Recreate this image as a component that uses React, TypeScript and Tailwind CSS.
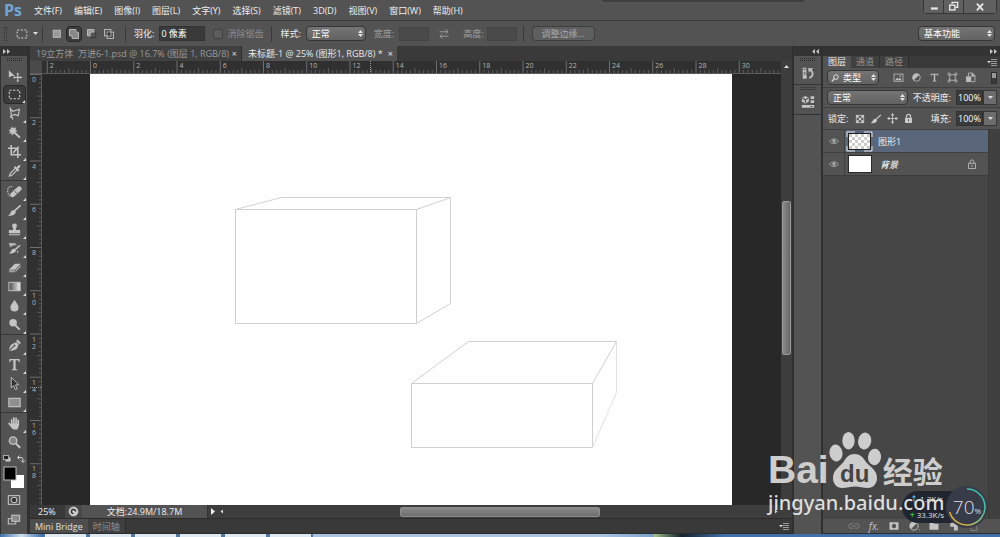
import React, { useState } from "react";

type Kids = { children?: React.ReactNode };

function Icon({ children, size = 16 }: Kids & { size?: number }) {
  return (
    <svg
      width={size}
      height={size}
      viewBox="0 0 16 16"
      fill="none"
      stroke="currentColor"
      strokeWidth="1.2"
      className="shrink-0"
      aria-hidden="true"
    >
      {children}
    </svg>
  );
}

const menus = [
  "文件(F)",
  "编辑(E)",
  "图像(I)",
  "图层(L)",
  "文字(Y)",
  "选择(S)",
  "滤镜(T)",
  "3D(D)",
  "视图(V)",
  "窗口(W)",
  "帮助(H)",
];

const marquee = <rect x="2.5" y="3.5" width="11" height="9" strokeDasharray="2.4 1.6" />;

type Tool = { name: string; art: React.ReactNode; plain?: boolean };

const toolGroups: Tool[][] = [
  [
    {
      name: "移动工具",
      plain: true,
      art: (
        <>
          <path d="M2 2.5v8l2.3-2 4 .1z" fill="currentColor" stroke="none" />
          <path d="M11.5 6v8M7.5 10h8" />
          <path d="M11.5 4.8l1.6 1.9H9.9zM11.5 15.2l1.6-1.9H9.9zM6.4 10l1.8-1.6v3.2zM16 10l-1.8-1.6v3.2z" fill="currentColor" stroke="none" />
        </>
      ),
    },
    { name: "矩形选框工具", art: marquee },
    {
      name: "多边形套索工具",
      art: <path d="M3.5 2.5l2.6 3.2 7.2-2.2-1.3 6.8-4.2-1.4-3 1.8zM4.8 10.4c-1.6.4-1.3 2 0 1.9M4.6 12c1.3.2 1.7 1.1 1.2 2.5" />,
    },
    {
      name: "魔棒工具",
      art: (
        <>
          <path d="M8.5 8.5l5.3 5" strokeWidth="2" />
          <path d="M6 1l1.1 2.4L9.8 2.500 9 5l2.3 1.3L9 7.400l.5 2.600L7 9.100 5.400 11.200 4.600 8.700 2 9l1.500-2.200L1.500 5.200l2.600-.4L3.900 2.200l2 1.200z" fill="currentColor" stroke="none" />
        </>
      ),
    },
    {
      name: "裁剪工具",
      art: <path d="M4.500 1v10.500h10.500M1 4.500h10.500V15M6.500 9.500l6-6.500" strokeWidth="1.700" />,
    },
    {
      name: "吸管工具",
      art: (
        <>
          <path d="M9 5.500l-5.600 5.700-.9 2.800 2.700-1 5.700-5.600" />
          <path d="M8 4l4.500 4.500" strokeWidth="2" />
          <path d="M9.500 5.500L12 2.600c1.400-1.200 3 .4 1.800 1.800L11 7z" fill="currentColor" stroke="none" />
        </>
      ),
    },
  ],
  [
    {
      name: "污点修复画笔工具",
      art: (
        <>
          <path d="M5.500 3C1.500 1.500 0 6 1 9.500s3.500 4.500 5 3" strokeDasharray="1.500 1" />
          <path d="M6 11.500l7-6.500" strokeWidth="5" strokeLinecap="round" />
          <path d="M8 7.500l3 3M8.500 9h.1M10.500 7.500h.1" stroke="#535353" strokeWidth="1" />
        </>
      ),
    },
    {
      name: "画笔工具",
      art: (
        <>
          <path d="M14.500 2.500L8 8.500" strokeWidth="1.800" />
          <path d="M7.500 7.500l2 2c-.8 3.500-4.800 4.800-8.500 3.700 2-.8 2.300-1.700 3-3.400.7-1.600 2.300-2.300 3.500-2.300z" fill="currentColor" stroke="none" />
        </>
      ),
    },
    {
      name: "仿制图章工具",
      art: (
        <path d="M8 1.500a2.500 2.500 0 0 1 2.400 3.300L9.500 7v1.500H14V12H2V8.500h4.500V7l-.9-2.200A2.500 2.500 0 0 1 8 1.500zM2 13h12v1.200H2z" fill="currentColor" stroke="none" />
      ),
    },
    {
      name: "历史记录画笔工具",
      art: (
        <>
          <path d="M14 4.500L9 9" strokeWidth="1.700" />
          <path d="M8 8l1.800 1.800c-1 3-4.600 4-8 3.200 2-.8 2-1.700 2.800-3C5.400 8.800 6.800 8 8 8zM1.500 2.500h8l-2 2h-3v2z" fill="currentColor" stroke="none" />
          <path d="M3 6c2-2 5-2.500 7-1.500M11.500 10.500l-.5 3" strokeDasharray="2 1" />
        </>
      ),
    },
    {
      name: "橡皮擦工具",
      art: (
        <>
          <path d="M2 10.500L8.500 4h6l-6 6.500z" fill="currentColor" stroke="none" />
          <path d="M2 10.800h6.300V13H2.500zM9 10.700L14.500 5v2.500L9 13z" fill="#a2a2a2" stroke="none" />
        </>
      ),
    },
    {
      name: "渐变工具",
      art: (
        <>
          <defs>
            <linearGradient id="ramp">
              <stop offset="0" stopColor="#4a4a4a" />
              <stop offset="1" stopColor="#f0f0f0" />
            </linearGradient>
          </defs>
          <rect x="2" y="3.500" width="12" height="9" fill="url(#ramp)" strokeWidth="1" />
        </>
      ),
    },
    {
      name: "模糊工具",
      art: <path d="M8 1.500c.8 2.700 4.300 5 4.300 8.500a4.300 4.300 0 0 1-8.600 0C3.700 6.500 7.200 4.200 8 1.500z" fill="currentColor" stroke="none" />,
    },
    {
      name: "减淡工具",
      art: (
        <>
          <circle cx="6.500" cy="6" r="4" fill="currentColor" stroke="none" />
          <path d="M9 9l4.500 4.500" strokeWidth="2" />
        </>
      ),
    },
  ],
  [
    {
      name: "钢笔工具",
      art: (
        <>
          <path d="M2 14c.5-3.500 1.500-7 4-8l4-1.500L12.500 7 11 10.500C10 13 6 13.500 2 14z" fill="currentColor" stroke="none" />
          <path d="M10.500 2.500l3.500 3.500" strokeWidth="2.200" />
          <path d="M2.500 13.500l5-5" stroke="#535353" />
          <circle cx="8" cy="8" r="1" fill="#535353" stroke="none" />
        </>
      ),
    },
    {
      name: "横排文字工具",
      art: <path d="M2.500 2h11v3.500h-.8c-.3-1.600-.8-2.100-2-2.100H9.200V12c0 .8.500 1 1.600 1.100v.9H5.200v-.9c1.100-.1 1.600-.3 1.600-1.100V3.400H5.300c-1.200 0-1.700.5-2 2.100h-.8z" fill="currentColor" stroke="none" />,
    },
    {
      name: "路径选择工具",
      art: <path d="M4.500 1.500v11l2.600-2.300L9 14.500l1.800-.8L9 9.500l3.500-.2z" fill="#303030" strokeWidth="1" />,
    },
    { name: "矩形工具", art: <rect x="2" y="3.500" width="12" height="9" fill="#8f8f8f" /> },
  ],
  [
    {
      name: "抓手工具",
      art: (
        <>
          <path d="M5 9V4M7.300 8V2M9.700 8V2.500M12 9V4.500M5 11.500L2.300 8" strokeWidth="1.800" strokeLinecap="round" />
          <path d="M4.200 8h8.700c0 3-.7 4-1.900 6.500H6.300L4 11z" fill="currentColor" stroke="none" />
        </>
      ),
    },
    {
      name: "缩放工具",
      plain: true,
      art: (
        <>
          <circle cx="6.500" cy="6" r="4" fill="#858585" strokeWidth="1.400" />
          <path d="M9.500 9l4.500 4.500" strokeWidth="2.200" />
        </>
      ),
    },
  ],
];

function Grip() {
  return <span className="h-[3px] w-[15px] border-y border-dotted border-[#2c2c2c]" />;
}

function ToolButton({ tool, active, onPick }: { tool: Tool; active: boolean; onPick: () => void }) {
  return (
    <button
      type="button"
      aria-label={tool.name}
      aria-pressed={active}
      onClick={onPick}
      className={
        active
          ? "relative flex h-[19px] w-[23px] shrink-0 items-center justify-center rounded-sm border border-[#2a2a2a] bg-[#3a3a3a] text-[#cfcfcf]"
          : "relative flex h-[19px] w-[23px] shrink-0 items-center justify-center text-[#c4c4c4]"
      }
    >
      <Icon size={15}>{tool.art}</Icon>
      {!tool.plain && (
        <svg width="3" height="3" viewBox="0 0 3 3" className="absolute right-0 bottom-0" aria-hidden="true">
          <path d="M3 0v3H0z" fill="#dedede" />
        </svg>
      )}
    </button>
  );
}

function Toolbar() {
  const [current, setCurrent] = useState("矩形选框工具");
  return (
    <aside className="flex w-7 shrink-0 flex-col border-x border-[#303030] bg-[#535353]">
      <div className="flex h-[10px] shrink-0 items-center bg-[#333] pl-[2px] text-[#c8c8c8]">
        <Chevrons />
      </div>
      <div className="flex h-[10px] shrink-0 items-start justify-center pt-[2px]">
        <Grip />
      </div>
      {toolGroups.map((group, i) => (
        <div
          key={i}
          className={i ? "flex flex-col items-center border-t border-[#383838] pt-[1px]" : "flex flex-col items-center"}
        >
          {group.map((t) => (
            <ToolButton key={t.name} tool={t} active={current === t.name} onPick={() => setCurrent(t.name)} />
          ))}
        </div>
      ))}
      <div className="flex flex-col items-center">
        <svg width="26" height="38" viewBox="0 0 26 38" aria-hidden="true">
          <rect x="4.500" y="5.500" width="5" height="4" fill="#d0d0d0" />
          <rect x="2.500" y="3.500" width="5" height="4" fill="#222" stroke="#aaa" />
          <path d="M17 5.500h3a2 2 0 0 1 2 2V10M18.500 3.500l-2 2 2 2M20 8.500l2 2 2-2" fill="none" stroke="#d0d0d0" />
          <rect x="10" y="23" width="13" height="13" fill="#fff" />
          <rect x="3" y="15" width="12" height="13" fill="#000" stroke="#bdbdbd" />
        </svg>
        <button type="button" aria-label="以快速蒙版模式编辑" className="flex h-[19px] items-center text-[#c4c4c4]">
          <Icon size={14}>
            <rect x="1.500" y="3" width="13" height="10" />
            <circle cx="8" cy="8" r="3.200" fill="#333" />
          </Icon>
        </button>
        <button type="button" aria-label="更改屏幕模式" className="flex h-[21px] items-center text-[#c4c4c4]">
          <Icon size={14}>
            <rect x="1.500" y="6.500" width="8.500" height="6" />
            <rect x="5.500" y="2.500" width="9" height="7" fill="#8a8a8a" />
          </Icon>
        </button>
      </div>
    </aside>
  );
}

function Chevrons({ left = false }: { left?: boolean }) {
  return (
    <svg width="7" height="5" viewBox="0 0 7 5" fill="currentColor" aria-hidden="true">
      {left ? <path d="M3 0v5L0 2.500zM7 0v5L4 2.500z" /> : <path d="M0 0l3 2.500L0 5zM4 0l3 2.500L4 5z" />}
    </svg>
  );
}

function Dropdown({ label, value, className, search = false }: { label: string; value: string; className: string; search?: boolean }) {
  return (
    <div className={"relative flex items-center " + className}>
      <select
        aria-label={label}
        className={
          "h-[15px] w-full appearance-none rounded-sm border border-[#363636] bg-linear-to-b from-[#757575] to-[#626262] text-[9px] leading-[13px] text-white outline-none " +
          (search ? "pl-[15px]" : "pl-[5px]")
        }
      >
        <option>{value}</option>
      </select>
      {search && (
        <svg width="8" height="8" viewBox="0 0 8 8" className="pointer-events-none absolute left-1" aria-hidden="true">
          <circle cx="5" cy="3" r="2.300" fill="none" stroke="#ddd" />
          <path d="M3.300 4.800L1 7.200" stroke="#ddd" strokeWidth="1.300" />
        </svg>
      )}
      <svg width="5" height="7" viewBox="0 0 5 7" className="pointer-events-none absolute right-[3px]" aria-hidden="true">
        <path d="M0 3l2.500-3L5 3zM0 4l2.500 3L5 4z" fill="#e4e4e4" />
      </svg>
    </div>
  );
}

function Divider() {
  return <span className="h-4 w-px shrink-0 bg-[#3a3a3a]" />;
}

function MenuBar() {
  return (
    <header className="relative flex h-[21px] shrink-0 items-center border-b border-[#3b3b3b] bg-[#535353]">
      <span className="w-[34px] pl-1 font-['Open_Sans'] text-[16px] leading-5 font-bold text-[#73a5d6]">Ps</span>
      <nav className="flex items-center gap-3 text-[9px] text-[#f0f0f0]">
        {menus.map((m) => (
          <button type="button" key={m} className="whitespace-nowrap">
            {m}
          </button>
        ))}
      </nav>
      <span className="absolute top-0 right-[196px] h-[2px] w-[202px] rounded-b bg-[#3e3e3e]" />
      <div className="mr-[3px] ml-auto flex h-[14px] self-start rounded-b-sm border border-t-0 border-[#363636] text-[#e8e8e8]">
        <button type="button" aria-label="最小化" className="flex w-5 items-center justify-center border-r border-[#363636] bg-[#606060]">
          <Icon size={12}>
            <path d="M4 10h9" strokeWidth="3" />
          </Icon>
        </button>
        <button type="button" aria-label="还原" className="flex w-5 items-center justify-center border-r border-[#363636] bg-[#606060]">
          <Icon size={11}>
            <path d="M6 4.500V2h8v7h-3" strokeWidth="2" />
            <rect x="2.500" y="6" width="7.500" height="7" strokeWidth="2" />
          </Icon>
        </button>
        <button type="button" aria-label="关闭" className="flex w-8 items-center justify-center bg-[#606060]">
          <Icon size={10}>
            <path d="M3 2.500l10 11M13 2.500l-10 11" strokeWidth="2.800" />
          </Icon>
        </button>
      </div>
    </header>
  );
}

function OptionsBar() {
  return (
    <div className="flex h-[25px] shrink-0 items-center bg-[#535353] pr-[5px] pl-[4px] text-[9px] text-[#eee]">
      <span className="mr-2 h-[14px] w-[3px] border-x border-dotted border-[#333]" />
      <span className="text-[#c8c8c8]">
        <Icon size={14}>{marquee}</Icon>
      </span>
      <svg width="5" height="3" viewBox="0 0 5 3" className="mr-1 ml-1" aria-hidden="true">
        <path d="M0 0h5L2.500 3z" fill="#ddd" />
      </svg>
      <Divider />
      <div className="mr-2 ml-[6px] flex items-center gap-px text-[#bdbdbd]">
        <button type="button" aria-label="新选区" className="flex h-4 w-4 items-center justify-center">
          <Icon size={12}>
            <rect x="3" y="3" width="9.500" height="9.500" fill="#999" />
          </Icon>
        </button>
        <button type="button" aria-label="添加到选区" className="flex h-4 w-4 items-center justify-center rounded-sm border border-[#292929] bg-[#3b3b3b]">
          <Icon size={12}>
            <path d="M2 2h8.500v3.500H14V14H5.500v-3.500H2z" fill="#888" />
          </Icon>
        </button>
        <button type="button" aria-label="从选区减去" className="ml-px flex h-4 w-4 items-center justify-center">
          <Icon size={12}>
            <path d="M2 2h8.500v3.500h-5v5H2z" fill="#999" />
            <path d="M13 6v7H6" stroke="#333" />
          </Icon>
        </button>
        <button type="button" aria-label="与选区交叉" className="flex h-4 w-4 items-center justify-center">
          <Icon size={12}>
            <rect x="2" y="2" width="8.500" height="8.500" />
            <rect x="5.500" y="5.500" width="8.500" height="8.500" />
            <rect x="6" y="6" width="4" height="4" fill="#333" stroke="none" />
          </Icon>
        </button>
      </div>
      <Divider />
      <label htmlFor="feather" className="mr-[5px] ml-2">
        羽化:
      </label>
      <input id="feather" defaultValue="0 像素" className="mr-2 h-[15px] w-[46px] border border-[#333] bg-[#3a3a3a] px-px text-white" />
      <input id="alias" type="checkbox" disabled className="mr-1 h-[10px] w-[10px] appearance-none rounded-xs border border-[#404040] bg-[#5c5c5c]" />
      <label htmlFor="alias" className="mr-2 text-[#8e8e8e]">
        消除锯齿
      </label>
      <Divider />
      <span className="mr-[5px] ml-2">样式:</span>
      <Dropdown label="样式" value="正常" className="w-[60px]" />
      <label htmlFor="selw" className="mr-[5px] ml-2 text-[#a0a0a0]">
        宽度:
      </label>
      <input id="selw" disabled className="h-[14px] w-[30px] border border-[#444] bg-[#4a4a4a]" />
      <button type="button" aria-label="高度和宽度互换" className="mx-[9px] text-[#a0a0a0]">
        <Icon size={12}>
          <path d="M2 5h11M10 2l3.500 3L10 8M14 11H3M6 8l-3.500 3L6 14" />
        </Icon>
      </button>
      <label htmlFor="selh" className="mr-[3px] ml-1 text-[#a0a0a0]">
        高度:
      </label>
      <input id="selh" disabled className="mr-[6px] h-[14px] w-[30px] border border-[#444] bg-[#4a4a4a]" />
      <Divider />
      <button type="button" className="ml-2 h-[15px] w-[63px] rounded-sm border border-[#3e3e3e] bg-[#5f5f5f] leading-[13px] text-[#a8a8a8]">
        调整边缘...
      </button>
      <Dropdown label="工作区" value="基本功能" className="ml-auto w-[77px]" />
    </div>
  );
}

const STEP = 43.25;
const range = (from: number, to: number) => Array.from({ length: to - from + 1 }, (_, i) => from + i);

function HorizontalRuler() {
  return (
    <div className="flex h-[13px] shrink-0 border-b border-[#5a5a5a] bg-[#303030]">
      <span className="w-3 shrink-0 bg-[#4a4a4a]" />
      <svg className="h-full w-full" fill="#b4b4b4" fontSize="7" fontFamily="Open Sans, sans-serif" aria-hidden="true">
        {range(-10, 400).map((k) => {
          const x = 48.5 + (k * STEP) / 10;
          const top = k % 10 === 0 ? 0 : k % 5 === 0 ? 7 : 9;
          return <path key={k} d={`M${x} ${top}V12`} stroke={k % 10 === 0 ? "#6e6e6e" : "#5c5c5c"} />;
        })}
        {range(-1, 15).map((n) => (
          <text key={n} x={51 + n * STEP} y="7">
            {Math.abs(n * 2)}
          </text>
        ))}
        <path d="M328.500 0V12" stroke="#999" strokeDasharray="1 1" />
      </svg>
    </div>
  );
}

function VerticalRuler() {
  return (
    <svg className="h-full w-3 shrink-0 border-r border-[#5a5a5a] bg-[#303030]" fill="#b4b4b4" fontSize="7" fontFamily="Open Sans, sans-serif" aria-hidden="true">
      {range(0, 300).map((k) => {
        const y = 0.5 + (k * STEP) / 10;
        const left = k % 10 === 0 ? 0 : k % 5 === 0 ? 7 : 9;
        return <path key={k} d={`M${left} ${y}H12`} stroke={k % 10 === 0 ? "#6e6e6e" : "#5c5c5c"} />;
      })}
      {range(0, 9).map((n) =>
        String(n * 2)
          .split("")
          .map((digit, i) => (
            <text key={`${n}-${i}`} x="2" y={8 + n * STEP + i * 7}>
              {digit}
            </text>
          ))
      )}
      <path d="M0 313.500H12" stroke="#999" strokeDasharray="1 1" />
    </svg>
  );
}

function Artwork() {
  return (
    <svg className="h-full w-full" fill="none" stroke="#d0d0d0" strokeWidth="1" aria-hidden="true">
      <rect x="145.500" y="135.500" width="181" height="114" />
      <path d="M145.500 135.500L191.500 123.500H360.500L326.500 135.500M360.500 123.500V229.500L326.500 249.500" />
      <rect x="321.500" y="309.500" width="181" height="64" />
      <path d="M321.500 309.500L378.500 267.500H526.500L502.500 309.500" />
      <path d="M526.500 267.500V318.500L502.500 373.500" stroke="#e0e0e0" />
    </svg>
  );
}

function PanelMenuIcon() {
  return (
    <svg width="10" height="7" viewBox="0 0 10 7" aria-hidden="true">
      <path d="M0 2h4L2 4.500z" fill="#ccc" />
      <path d="M4 .5h6M4 2.500h6M4 4.500h6M4 6.500h6" stroke="#999" />
    </svg>
  );
}

function Workspace() {
  return (
    <main className="flex min-w-0 flex-1 flex-col bg-[#303030] pl-[2px]">
      <div className="flex h-[15px] shrink-0 items-stretch bg-[#3a3a3a] text-[9px]">
        <div className="flex w-[212px] items-center justify-between border-r border-[#2c2c2c] bg-[#404040] pr-1 pl-[6px] text-[#9a9a9a]">
          <span className="whitespace-pre">19立方体  万进6-1.psd @ 16.7% (图层 1, RGB/8)</span>
          <button type="button" aria-label="关闭 19立方体" className="text-[#ddd]">
            ×
          </button>
        </div>
        <div className="flex w-[155px] items-center justify-between bg-[#535353] pr-1 pl-[6px] text-[#e8e8e8]">
          <span className="whitespace-pre">未标题-1 @ 25% (图形1, RGB/8) *</span>
          <button type="button" aria-label="关闭 未标题-1">
            ×
          </button>
        </div>
      </div>
      <div className="flex min-h-0 flex-1">
        <div className="flex min-w-0 flex-1 flex-col">
          <HorizontalRuler />
          <div className="flex min-h-0 flex-1">
            <VerticalRuler />
            <div className="flex min-w-0 flex-1 justify-start bg-[#282828] pl-12">
              <div className="w-[642px] bg-white">
                <Artwork />
              </div>
            </div>
          </div>
        </div>
        <div className="flex w-[11px] shrink-0 flex-col items-center bg-[#3d3d3d]">
          <svg width="5" height="3" viewBox="0 0 5 3" className="mt-1" aria-hidden="true">
            <path d="M0 3h5L2.500 0z" fill="#ddd" />
          </svg>
          <div className="flex-[134]" />
          <div className="w-[9px] flex-[152] rounded-xs border border-[#999] bg-linear-to-r from-[#8a8a8a] to-[#686868]" />
          <div className="flex-[151]" />
        </div>
      </div>
      <div className="flex h-[13px] shrink-0 items-center bg-[#3d3d3d] text-[9px] leading-[13px] text-[#eee]">
        <span className="w-[35px] bg-[#383838] pl-2">25%</span>
        <span className="flex h-full w-[17px] items-center justify-center bg-[#484848] text-[#ccc]">
          <Icon size={11}>
            <circle cx="8" cy="8" r="6.500" fill="currentColor" />
            <path d="M5 5h4M11 8a3 3 0 1 0-3 3" stroke="#333" strokeWidth="2" />
          </Icon>
        </span>
        <span className="w-[126px] border-r border-[#333] bg-[#535353] text-center">文档:24.9M/18.7M</span>
        <svg width="17" height="7" viewBox="0 0 17 7" className="shrink-0" aria-hidden="true">
          <path d="M3 0v7l4-3.500z" fill="#eee" />
          <path d="M15 1.500v4l-2.500-2z" fill="#ddd" />
        </svg>
        <div className="flex-[176]" />
        <div className="h-[10px] flex-[198] rounded-xs border border-[#8d8d8d] bg-linear-to-b from-[#8a8a8a] to-[#6d6d6d]" />
        <div className="flex-[176]" />
        <svg width="17" height="7" viewBox="0 0 17 7" className="shrink-0" aria-hidden="true">
          <path d="M0 1.500v4L2.500 3.500z" fill="#ddd" />
        </svg>
      </div>
      <div className="flex h-4 shrink-0 items-stretch border-t border-b border-[#2c2c2c] bg-[#393939] text-[9px]">
        <button type="button" className="bg-[#4d4d4d] px-[5px] text-[#e0e0e0]">
          Mini Bridge
        </button>
        <button type="button" className="border-r border-[#2c2c2c] bg-[#404040] px-[5px] text-[#909090]">
          时间轴
        </button>
        <span className="mr-[3px] ml-auto flex items-center">
          <PanelMenuIcon />
        </span>
      </div>
    </main>
  );
}

function Dock() {
  return (
    <div className="flex w-[27px] shrink-0 flex-col bg-[#535353] text-[#c4c4c4]">
      <div className="flex h-[10px] shrink-0 items-center justify-end bg-[#333] pr-[2px]">
        <Chevrons left />
      </div>
      <button type="button" aria-label="历史记录" className="flex h-[29px] flex-col items-center justify-between border-b border-[#343434] pt-[2px] pb-1">
        <Grip />
        <Icon size={14}>
          <path d="M2.500 2.500h3v3h-3zM2.500 6.500h3v3h-3z" />
          <rect x="2" y="10.500" width="4.500" height="4" fill="currentColor" stroke="none" />
          <path d="M9.500 13.500C14 12 14.500 7.500 11 4.500" strokeWidth="2" />
          <path d="M8 2.500h6L9 7.500z" fill="currentColor" stroke="none" />
        </Icon>
      </button>
      <button type="button" aria-label="属性" className="flex h-[30px] flex-col items-center justify-between border-b border-[#343434] pt-[2px] pb-[5px]">
        <Grip />
        <Icon size={14}>
          <path d="M5 1l4 2v4.500l-4 2.500-4-2.500V3z" fill="currentColor" stroke="none" />
          <path d="M1.500 3.500L5 5.500l3.500-2M5 5.500V9.500" stroke="#535353" />
          <path d="M11 1.500h4v3h-4zM11 6h4v3h-4zM1 11.500h14v3H1z" fill="currentColor" stroke="none" />
          <path d="M10.500 12.500h3l-1.500 1.500z" fill="#444" stroke="none" />
        </Icon>
      </button>
    </div>
  );
}

const lockArt = (
  <>
    <rect x="3" y="7" width="10" height="7.500" fill="currentColor" stroke="none" />
    <path d="M5 7V5a3 3 0 0 1 6 0v2" strokeWidth="1.800" />
    <path d="M8 9v3" stroke="#535353" strokeWidth="1.500" />
  </>
);

const filters: { name: string; art: React.ReactNode }[] = [
  {
    name: "像素图层滤镜",
    art: (
      <>
        <rect x="1.500" y="3" width="13" height="10.500" />
        <path d="M3 12l3-4 2 2 2-1.500 3 3.500z" fill="currentColor" stroke="none" />
        <circle cx="10.500" cy="6" r="1.200" fill="currentColor" stroke="none" />
      </>
    ),
  },
  {
    name: "调整图层滤镜",
    art: (
      <>
        <circle cx="8" cy="8" r="5.500" />
        <path d="M4 12A5.500 5.500 0 0 1 12 4z" fill="currentColor" stroke="none" />
      </>
    ),
  },
  {
    name: "文字图层滤镜",
    art: <path d="M2.500 2.500h11v3h-1l-.8-1.500H9.100v8.500l1.500.4v.8H5.400v-.8l1.500-.4V4H4.300l-.8 1.500h-1z" fill="currentColor" stroke="none" />,
  },
  {
    name: "形状图层滤镜",
    art: (
      <>
        <path d="M4 4h8v8H4z" />
        <path d="M1.500 1.500h3v3h-3zM11.500 1.500h3v3h-3zM1.500 11.500h3v3h-3zM11.500 11.500h3v3h-3z" strokeWidth="1" />
      </>
    ),
  },
  {
    name: "智能对象滤镜",
    art: (
      <>
        <path d="M5 6V1.500h6L14.500 5v9H9" />
        <path d="M10 2v4h4z" fill="currentColor" />
        <rect x="2" y="7" width="6.500" height="7" fill="currentColor" />
      </>
    ),
  },
];

function Percent({ id, label }: { id: string; label: string }) {
  return (
    <div className="ml-auto flex items-center">
      <label htmlFor={id} className="mr-[5px]">
        {label}
      </label>
      <input id={id} defaultValue="100%" className="h-[15px] w-[27px] border border-[#333] bg-[#3a3a3a] pl-px text-white" />
      <button type="button" aria-label={label + "滑块"} className="flex h-[15px] w-[14px] items-center justify-center border border-[#363636] bg-[#6c6c6c]">
        <svg width="5" height="3" viewBox="0 0 5 3" aria-hidden="true">
          <path d="M0 0h5L2.500 3z" fill="#ddd" />
        </svg>
      </button>
    </div>
  );
}

function Eye() {
  return (
    <button type="button" aria-label="图层可见性" className="flex w-[22px] shrink-0 items-center justify-center self-stretch border-r border-[#404040] bg-[#535353] text-[#a8a8a8]">
      <Icon size={10}>
        <path d="M1 8.500C4 3.500 12 3.500 15 8.500 12 13 4 13 1 8.500z" strokeWidth="1.600" />
        <circle cx="8" cy="8" r="2.800" fill="currentColor" stroke="none" />
      </Icon>
    </button>
  );
}

function LayersPanel() {
  return (
    <section className="ml-[2px] flex min-w-0 flex-1 flex-col bg-[#535353] text-[9px] text-[#eee]">
      <div className="flex h-[10px] shrink-0 items-center justify-end bg-[#333] pr-[3px] text-[#c8c8c8]">
        <Chevrons />
      </div>
      <div className="flex h-3 shrink-0 items-stretch bg-[#3a3a3a] leading-3">
        <button type="button" className="bg-[#535353] px-[5px]">
          图层
        </button>
        <button type="button" className="border-r border-[#2f2f2f] bg-[#404040] px-[5px] text-[#949494]">
          通道
        </button>
        <button type="button" className="border-r border-[#2f2f2f] bg-[#404040] px-[5px] text-[#949494]">
          路径
        </button>
        <span className="mr-[3px] ml-auto flex items-center">
          <PanelMenuIcon />
        </span>
      </div>
      <div className="flex h-5 shrink-0 items-center border-b border-[#404040] pr-[3px] pl-1">
        <Dropdown label="滤镜类型" value="类型" className="w-[52px]" search />
        <div className="ml-[13px] flex items-center gap-[5px] text-[#bdbdbd]">
          {filters.map((f) => (
            <button type="button" key={f.name} aria-label={f.name} className="flex w-[13px] justify-center">
              <Icon size={11}>{f.art}</Icon>
            </button>
          ))}
        </div>
        <button type="button" aria-label="打开或关闭图层过滤" className="ml-auto h-3 w-[6px] border border-[#2e2e2e] bg-linear-to-b from-[#999] from-50% to-[#3a3a3a] to-50%" />
      </div>
      <div className="flex h-5 shrink-0 items-center border-b border-[#404040] pr-[3px] pl-1">
        <Dropdown label="混合模式" value="正常" className="w-[81px]" />
        <Percent id="opacity" label="不透明度:" />
      </div>
      <div className="flex h-[22px] shrink-0 items-center border-b border-[#404040] pr-[3px] pl-[5px]">
        <span className="mr-[7px]">锁定:</span>
        <div className="flex items-center gap-[5px] text-[#cdcdcd]">
          <button type="button" aria-label="锁定透明像素">
            <Icon size={10}>
              <rect x="2" y="2" width="12" height="12" />
              <path d="M2 2h4v4H2zM10 2h4v4h-4zM6 6h4v4H6zM2 10h4v4H2zM10 10h4v4h-4z" fill="currentColor" stroke="none" />
            </Icon>
          </button>
          <button type="button" aria-label="锁定图像像素">
            <Icon size={12}>{toolGroups[1][1].art}</Icon>
          </button>
          <button type="button" aria-label="锁定位置">
            <Icon size={11}>
              <path d="M8 2v12M2 8h12" />
              <path d="M8 0l2.500 3.500h-5zM8 16l2.500-3.500h-5zM0 8l3.500-2.500v5zM16 8l-3.500-2.500v5z" fill="currentColor" stroke="none" />
            </Icon>
          </button>
          <button type="button" aria-label="锁定全部">
            <Icon size={11}>{lockArt}</Icon>
          </button>
        </div>
        <Percent id="fill" label="填充:" />
      </div>
      <div className="flex min-h-0 flex-1 bg-[#464646]">
        <ul className="min-w-0 flex-1">
          <li className="flex h-[23px] items-center border-b border-[#404040] bg-[#5a677a]">
            <Eye />
            <svg width="27" height="21" viewBox="0 0 27 21" className="mx-px shrink-0" aria-hidden="true">
              <defs>
                <pattern id="checker" width="6" height="6" patternUnits="userSpaceOnUse">
                  <rect width="6" height="6" fill="#fff" />
                  <path d="M0 0h3v3H0zM3 3h3v3H3z" fill="#ccc" />
                </pattern>
              </defs>
              <path d="M1 6V1h8M18 1h8v5M26 15v5h-8M9 20H1v-5" fill="none" stroke="#e4e8ee" />
              <rect x="2.500" y="2.500" width="22" height="16" fill="url(#checker)" stroke="#222" />
            </svg>
            <span className="ml-1">图形1</span>
          </li>
          <li className="flex h-[23px] items-center border-b border-[#3c3c3c] bg-[#535353]">
            <Eye />
            <span className="mr-1 ml-[3px] h-[18px] w-6 shrink-0 border border-[#2a2a2a] bg-white" />
            <span className="ml-1 font-medium italic">背景</span>
            <span className="mr-[10px] ml-auto text-[#b8b8b8]">
              <Icon size={12}>
                <rect x="3.500" y="7" width="9" height="7" />
                <path d="M5.500 7V5a2.500 2.500 0 0 1 5 0v2M8 9v3" />
              </Icon>
            </span>
          </li>
        </ul>
        <div className="w-3 shrink-0 border-l border-[#3a3a3a] bg-[#404040]" />
      </div>
      <div className="flex h-[15px] shrink-0 items-center justify-end gap-2 border-b border-[#2c2c2c] bg-[#535353] pr-5 text-[#c4c4c4]">
        <button type="button" aria-label="链接图层" className="text-[#858585]">
          <Icon size={12}>
            <path d="M7 5H4a3 3 0 0 0 0 6h3M9 5h3a3 3 0 0 1 0 6H9M5 8h6" />
          </Icon>
        </button>
        <button type="button" aria-label="添加图层样式" className="w-3 text-[10px] leading-3 italic">
          fx.
        </button>
        <button type="button" aria-label="添加图层蒙版">
          <Icon size={12}>
            <path fillRule="evenodd" d="M2 3h12v10H2zM8 5a3 3 0 1 0 .01 0z" fill="currentColor" stroke="none" />
          </Icon>
        </button>
        <button type="button" aria-label="新建调整图层">
          <Icon size={12}>
            {filters[1].art}
            <path d="M15 13h1.500" strokeWidth="1.500" />
          </Icon>
        </button>
        <button type="button" aria-label="新建组">
          <Icon size={12}>
            <path d="M2 3h5l1 2h6v8H2z" fill="currentColor" stroke="none" />
          </Icon>
        </button>
        <button type="button" aria-label="新建图层">
          <Icon size={12}>
            <path d="M3 2h10v12H8V9H3z" fill="currentColor" stroke="none" />
          </Icon>
        </button>
        <button type="button" aria-label="删除图层" className="text-[#858585]">
          <Icon size={12}>
            <path d="M3 4h10M6 3h4M4 6h8v8H4z" />
          </Icon>
        </button>
      </div>
    </section>
  );
}

function Taskbar() {
  return (
    <div className="flex h-[3px] shrink-0 bg-linear-to-r from-[#a9c4e2] from-60% via-[#4675ae] via-72% to-[#3f6ca5]">
      <span className="w-[43px] bg-linear-to-r from-[#3d6ea8] via-[#cfe0ee] to-[#3d6ea8]" />
      {[0, 1, 2, 3, 4, 5].map((n) => (
        <span key={n} className="w-[45px] border-x-2 border-[#56799f] bg-[#dfe9f2]" />
      ))}
      <span className="ml-auto w-[346px] bg-linear-to-r from-[#a9c48c] via-[#16222e] via-8% to-[#4170aa] to-20%" />
    </div>
  );
}

function Watermark() {
  return (
    <div className="pointer-events-none absolute right-[54px] bottom-[19px] flex w-[178px] flex-col text-[#cdcdcd]">
      <div className="flex items-end">
        <span className="font-['Liberation_Sans'] text-[39px] leading-9 font-bold">Bai</span>
        <div className="relative flex h-14 w-[52px] items-end justify-center">
          <svg viewBox="0 0 52 56" className="absolute inset-0 h-full w-full" fill="currentColor" aria-hidden="true">
            <ellipse cx="7" cy="21" rx="6.500" ry="8.500" transform="rotate(-8 7 21)" />
            <ellipse cx="19.500" cy="8.700" rx="6.200" ry="8.700" />
            <ellipse cx="35.500" cy="9" rx="6.500" ry="8.500" transform="rotate(10 35.500 10)" />
            <ellipse cx="45.500" cy="25" rx="6.500" ry="8.300" transform="rotate(6 45.500 25)" />
            <path d="M25.500 22c5.500 0 8.500 3 11.500 8 3.500 4.500 11 7.500 11 16 0 6-4 10-9 10-4.500 0-9-1.500-13-1.500S17.500 56 13 56c-5 0-9-4-9-10 0-8 6.500-11 10.500-16 3-5 5.500-8 11-8z" />
          </svg>
          <span className="relative font-['Liberation_Sans'] text-[24px] leading-7 font-bold text-[#444]">du</span>
        </div>
        <span className="ml-[2px] text-[30px] leading-8 font-bold">经验</span>
      </div>
      <span className="font-['Noto_Sans'] text-[20px] leading-[30px] font-medium text-[#dedede]">jingyan.baidu.com</span>
    </div>
  );
}

function SpeedMeter() {
  return (
    <div className="absolute right-[12px] bottom-[9px] flex h-[42px] w-[86px] items-center">
      <div className="flex h-8 w-16 flex-col justify-center rounded-2xl bg-[#20252f] pl-2 text-[8px] leading-4 text-[#dfe3ea]">
        <span>
          <b className="text-[#5fb4f0]">↑</b> 1.3K/s
        </span>
        <span>
          <b className="text-[#35c435]">+</b> 33.3K/s
        </span>
      </div>
      <div className="absolute right-0 flex h-[42px] w-[42px] items-center justify-center rounded-full bg-[#383c49] text-[#dcdfe5]">
        <svg viewBox="0 0 42 42" className="absolute inset-0" fill="none" strokeWidth="1.500" aria-hidden="true">
          <defs>
            <linearGradient id="arc" x1="1" y1="0" x2="0" y2="1">
              <stop offset="0.200" stopColor="#3cc4b4" />
              <stop offset="0.550" stopColor="#8fc27c" />
              <stop offset="0.800" stopColor="#d9b13c" />
            </linearGradient>
          </defs>
          <path d="M21 3a18 18 0 1 1-17.300 23" stroke="url(#arc)" />
        </svg>
        <span className="relative flex items-baseline font-['Open_Sans'] text-[19px] font-light">
          70<span className="text-[8px] font-normal">%</span>
        </span>
      </div>
    </div>
  );
}

export default function App() {
  return (
    <div
      lang="zh-CN"
      className="relative flex h-screen flex-col overflow-hidden bg-[#303030] font-['Open_Sans','Noto_Sans_CJK_SC',sans-serif] leading-none"
    >
      <MenuBar />
      <OptionsBar />
      <div className="flex min-h-0 flex-1">
        <Toolbar />
        <Workspace />
        <div className="ml-[2px] flex w-[206px] shrink-0">
          <Dock />
          <LayersPanel />
        </div>
      </div>
      <Taskbar />
      <SpeedMeter />
      <Watermark />
    </div>
  );
}
